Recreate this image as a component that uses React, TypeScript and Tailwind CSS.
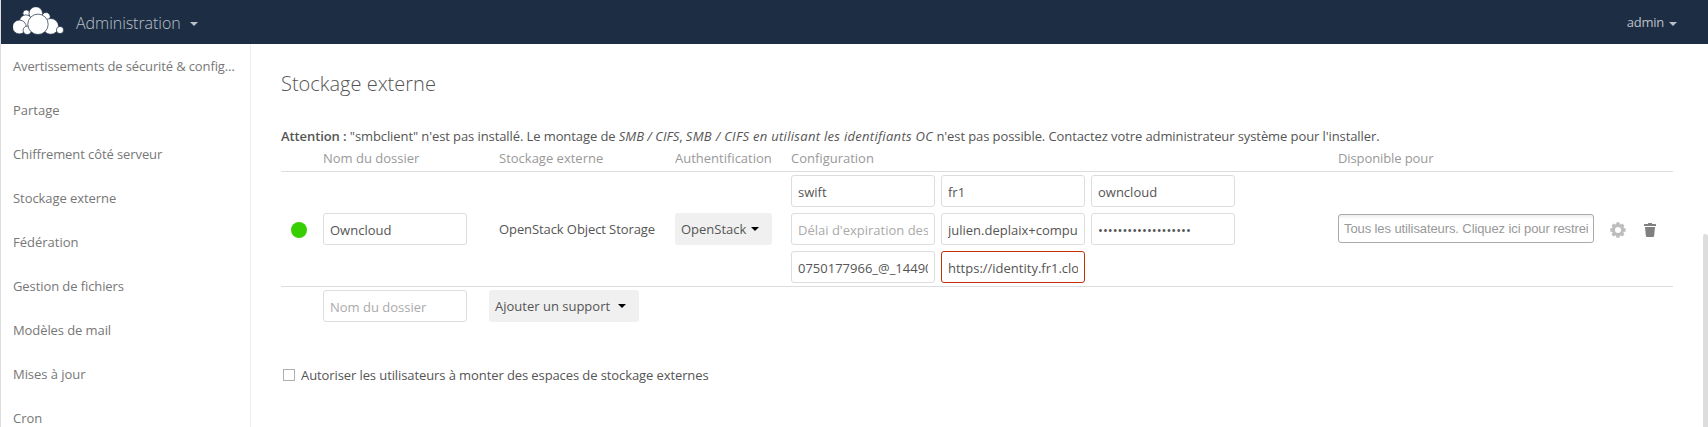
import React from "react";

const NAV: [string, string][] = [
  ["Avertissements de sécurité & config…", "tracking-[-0.13px]"],
  ["Partage", ""],
  ["Chiffrement côté serveur", "tracking-[-0.09px]"],
  ["Stockage externe", "tracking-[-0.06px]"],
  ["Fédération", ""],
  ["Gestion de fichiers", "tracking-[-0.09px]"],
  ["Modèles de mail", "tracking-[-0.09px]"],
  ["Mises à jour", "tracking-[-0.05px]"],
  ["Cron", ""],
];

function Logo() {
  const circles: [number, number, number][] = [
    [13.3, 6.3, 3.4],
    [33, 9.7, 4.2],
    [22.8, 6.5, 6.8],
    [12.9, 14.3, 6.4],
    [6.4, 20, 6.9],
    [14.3, 23.3, 4.2],
    [37.7, 19.4, 7.9],
    [47, 23, 3.6],
    [25, 17.3, 10.2],
  ];
  return (
    <svg className="h-[30px] w-[52px] shrink-0" viewBox="0 0 52 30">
      {circles.map(([x, y, r], i) => (
        <circle key={i} cx={x} cy={y} r={r} fill="#fff" stroke="#1d2d44" strokeWidth="0.7" />
      ))}
    </svg>
  );
}

function Caret({ className }: { className: string }) {
  return (
    <svg className={className} viewBox="0 0 8 4">
      <path d="M0 0h8L4 4z" fill="currentColor" />
    </svg>
  );
}

function Gear() {
  return (
    <svg className="h-4 w-4" viewBox="0 0 16 16">
      <g fill="#bdbdbd">
        {[0, 45, 90, 135].map((a) => (
          <rect key={a} x="6.3" y="0.3" width="3.4" height="15.4" rx="0.5" transform={`rotate(${a} 8 8)`} />
        ))}
        <circle cx="8" cy="8" r="6.2" />
      </g>
      <circle cx="8" cy="8" r="3" fill="#fff" />
    </svg>
  );
}

function Trash() {
  return (
    <svg className="h-4 w-4" viewBox="0 0 16 16">
      <path d="M6.4 1h3.2l.6 1H13.5l.5.6V4H2V2.6l.5-.6h3.3zM3 5h10l-.9 9.2-.8.8H4.7l-.8-.8z" fill="#808080" />
    </svg>
  );
}

function Field({ value = "", placeholder, type = "text", invalid = false }: {
  value?: string;
  placeholder?: string;
  type?: string;
  invalid?: boolean;
}) {
  return (
    <input
      type={type}
      defaultValue={value}
      placeholder={placeholder}
      className={`block h-8 w-36 rounded-[3px] border bg-white px-1.5 pt-[3px] pb-px text-[13px] text-[#555] outline-none placeholder:text-[#aaa] ${invalid ? "border-[#c43008]" : "border-[#ddd]"}`}
    />
  );
}

export default function App() {
  return (
    <div className="h-[427px] w-full overflow-hidden border-l border-[#ddd] bg-white font-['Open_Sans',sans-serif] text-[13px] leading-5 text-[#555]">
      <header className="flex h-11 items-center bg-[#1d2d44] pl-3 pr-[31px] text-[#bbc0c7]">
        <Logo />
        <span className="ml-[11px] pt-0.5 text-base font-light tracking-[-0.04px]">Administration</span>
        <Caret className="mt-1 ml-[9px] h-1 w-2" />
        <span className="ml-auto tracking-[-0.25px]">admin</span>
        <Caret className="mt-1 ml-[5px] h-1 w-2" />
      </header>
      <div className="flex h-[383px]">
        <nav className="w-[250px] shrink-0 overflow-hidden border-r border-[#eee] text-[#777]">
          {NAV.map(([label, tracking]) => (
            <a key={label} className={`block h-11 px-3 leading-[44px] whitespace-nowrap ${tracking}`}>{label}</a>
          ))}
        </nav>
        <main className="min-w-0 grow pt-[26px] pl-[30px]">
          <h2 className="text-xl leading-7 font-light">Stockage externe</h2>
          <p className="mt-7 tracking-[-0.092px] whitespace-nowrap">
            <b className="font-semibold">Attention :</b> "smbclient" n'est pas installé. Le montage de{" "}
            <i className="tracking-normal">SMB / CIFS</i>,{" "}
            <i className="tracking-[0.3px]">SMB / CIFS en utilisant les identifiants OC</i> n'est pas possible. Contactez votre administrateur système pour l'installer.
          </p>
          <div className="w-[1392px]">
            <div className="grid h-[26px] grid-cols-[42px_176px_176px_116px_547px_1fr] border-b border-[#ddd] pt-0.5 text-[#999]">
              <span />
              <span>Nom du dossier</span>
              <span>Stockage externe</span>
              <span>Authentification</span>
              <span>Configuration</span>
              <span className="tracking-[-0.1px]">Disponible pour</span>
            </div>
            <div className="grid h-[115px] grid-cols-[42px_176px_176px_116px_547px_1fr] items-center border-b border-[#ddd]">
              <span className="mt-0.5 ml-2.5 h-4 w-4 rounded-full bg-[#37ce02]" />
              <Field value="Owncloud" />
              <span className="tracking-[-0.09px]">OpenStack Object Storage</span>
              <span className="flex h-8 w-[97px] items-center rounded-[3px] bg-[#f0f0f0] pl-1.5">
                OpenStack
                <Caret className="ml-[5px] h-1 w-2 text-black" />
              </span>
              <div className="grid grid-cols-[144px_144px_144px] gap-1.5">
                <Field value="swift" />
                <Field value="fr1" />
                <Field value="owncloud" />
                <Field placeholder="Délai d'expiration des requêtes HTTP" />
                <Field value="julien.deplaix+compute" />
                <Field type="password" value="owncloud-storage-01" />
                <Field value="0750177966_@_144900" />
                <Field value="https://identity.fr1.cloud" invalid />
              </div>
              <div className="-mt-px flex items-center">
                <div className="h-[29px] w-64 rounded-[3px] border border-[#aaa] bg-linear-to-b from-[#eee] to-white to-15% px-[5px] font-['Liberation_Sans',sans-serif] text-[13px] leading-[27px] tracking-[-0.1px] text-[#999]">
                  <div className="overflow-hidden whitespace-nowrap">Tous les utilisateurs. Cliquez ici pour restreindre.</div>
                </div>
                <span className="mt-[3px] ml-4"><Gear /></span>
                <span className="mt-[3px] ml-4"><Trash /></span>
              </div>
            </div>
            <div className="flex pt-[3px] pl-[42px]">
              <Field placeholder="Nom du dossier" />
              <span className="ml-[22px] flex h-8 w-[150px] items-center rounded-[3px] bg-[#f0f0f0] pl-1.5">
                Ajouter un support
                <Caret className="ml-2 h-1 w-2 text-black" />
              </span>
            </div>
          </div>
          <label className="mt-[43px] ml-0.5 flex items-center gap-1.5 tracking-[-0.095px]">
            <span className="h-3 w-3 border border-[#b0b0b0]" />
            Autoriser les utilisateurs à monter des espaces de stockage externes
          </label>
        </main>
        <div className="mt-[190px] w-[5px] shrink-0 rounded-t-[3px] bg-[#ddd]" />
      </div>
    </div>
  );
}
